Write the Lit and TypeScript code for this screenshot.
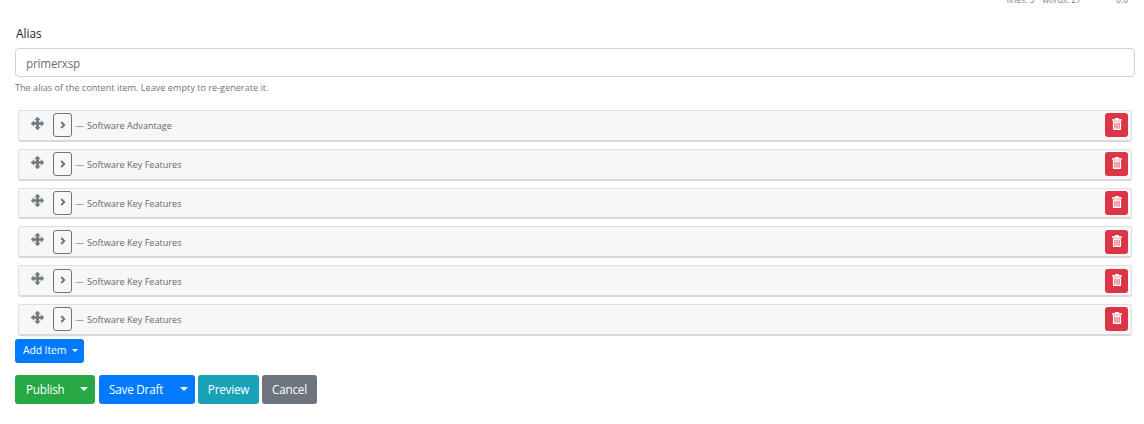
import { LitElement, html, css, svg } from "lit";
import { customElement } from "lit/decorators.js";

const items = ["Software Advantage", "Software Key Features", "Software Key Features", "Software Key Features", "Software Key Features", "Software Key Features"];

const moveIcon = svg`<path d="M6.5 0 L3.9 2.8 H5.4 V5.4 H2.8 V3.9 L0 6.5 L2.8 9.1 V7.6 H5.4 V10.2 H3.9 L6.5 13 L9.1 10.2 H7.6 V7.6 H10.2 V9.1 L13 6.5 L10.2 3.9 V5.4 H7.6 V2.8 H9.1 Z" fill="#6c757d" stroke="#6c757d" stroke-width=".5" stroke-linejoin="round"/>`;
const trashIcon = svg`<path fill="#fff" fill-rule="evenodd" d="M3.6 0 H7.4 L8 1.3 H11 V2.8 H0 V1.3 H3 Z M1 3.6 H10 V12 Q10 13 9 13 H2 Q1 13 1 12 Z M2.7 5 V11.6 H3.7 V5 Z M5 5 V11.6 H6 V5 Z M7.3 5 V11.6 H8.3 V5 Z"/>`;

@customElement("app-root")
export class AppRoot extends LitElement {
  static styles = css`
    :host { display: block; width: 1144px; height: 424px; overflow: hidden; background: #fff; box-sizing: border-box; padding: 0 9px 0 15px; font-family: "Open Sans", "Noto Sans", sans-serif; color: #212529; }
    .stats { height: 5px; overflow: hidden; display: flex; justify-content: flex-end; gap: 8px; padding-right: 7px; font-size: 8.5px; line-height: 5px; color: #7b7f83; }
    .stats span { display: block; margin-top: -3px; }
    .stats .pos { margin-left: 27px; }
    label { display: block; margin-top: 21px; font-size: 11.8px; line-height: 15px; color: #212529; padding-left: 1px; }
    .input { margin-top: 7px; box-sizing: border-box; height: 29px; border: 1px solid #ced4da; border-radius: 4px; padding: 0 10px; display: flex; align-items: center; font-size: 11.7px; letter-spacing: -0.2px; color: #6f6f6f; background: #fffffd; }
    .help { margin-top: 5px; font-size: 9.15px; line-height: 12px; color: #6c757d; }
    .list { margin: 16px 3px 0; display: flex; flex-direction: column; gap: 7px; }
    .card { box-sizing: border-box; height: 31.8px; background: #f7f7f7; border: 1px solid #dfdfdf; border-bottom: 2px solid #d8d8d8; border-radius: 3px; display: flex; align-items: center; padding: 0 3px 0 12px; }
    .move { width: 13px; height: 13px; margin-top: -4px; flex: none; }
    .toggle { box-sizing: border-box; width: 19px; height: 24px; margin-left: 9px; flex: none; border: 1px solid #6c757d; border-radius: 3px; display: flex; align-items: center; justify-content: center; }
    .toggle svg { width: 6px; height: 8px; margin-top: -1px; }
    .title { margin-left: 3px; margin-top: 1px; font-size: 9.1px; color: #62696f; flex: 1; white-space: nowrap; }
    .dash { display: inline-block; width: 12px; }
    .del { width: 23px; height: 24px; background: #dc3545; border-radius: 3px; display: flex; align-items: center; justify-content: center; }
    .del svg { width: 10px; height: 12px; margin-top: -2px; }
    .btn { box-sizing: border-box; color: #fff; border-radius: 3px; display: flex; align-items: center; white-space: nowrap; }
    .caret { display: block; width: 0; height: 0; border-top: 4px solid #fff; border-left: 4px solid transparent; border-right: 4px solid transparent; }
    .add { margin-top: 3.2px; width: 69px; height: 24px; background: #007bff; font-size: 10.4px; letter-spacing: -0.1px; padding: 0 0 1px 8px; gap: 6px; }
    .add .caret { border-width: 3.5px 3.5px 0; }
    .actions { margin-top: 12px; display: flex; gap: 3px; font-size: 11.7px; letter-spacing: -0.2px; }
    .actions .btn { height: 29px; }
    .publish { width: 80px; background: #28a745; padding-left: 11px; justify-content: space-between; padding-right: 7px; margin-right: 1px; }
    .draft { width: 96px; background: #007bff; padding-left: 10px; justify-content: space-between; padding-right: 7px; }
    .preview { width: 61px; background: #17a2b8; justify-content: center; }
    .cancel { width: 55px; background: #6c757d; justify-content: center; }
  `;

  render() {
    return html`
      <div class="stats"><span>lines: 3</span><span>words: 27</span><span class="pos">0:0</span></div>
      <label>Alias</label>
      <div class="input">primerxsp</div>
      <div class="help">The alias of the content item. Leave empty to re-generate it.</div>
      <div class="list">
        ${items.map((t) => html`
          <div class="card">
            <svg class="move" viewBox="0 0 13 13">${moveIcon}</svg>
            <div class="toggle"><svg viewBox="0 0 6 8"><path d="M1.2 1 L4.2 4 L1.2 7" fill="none" stroke="#6c757d" stroke-width="1.9"/></svg></div>
            <div class="title"><span class="dash">—</span>${t}</div>
            <div class="del"><svg viewBox="0 0 11 13">${trashIcon}</svg></div>
          </div>`)}
      </div>
      <div class="btn add">Add Item <span class="caret"></span></div>
      <div class="actions">
        <div class="btn publish">Publish <span class="caret"></span></div>
        <div class="btn draft">Save Draft <span class="caret"></span></div>
        <div class="btn preview">Preview</div>
        <div class="btn cancel">Cancel</div>
      </div>
    `;
  }
}
